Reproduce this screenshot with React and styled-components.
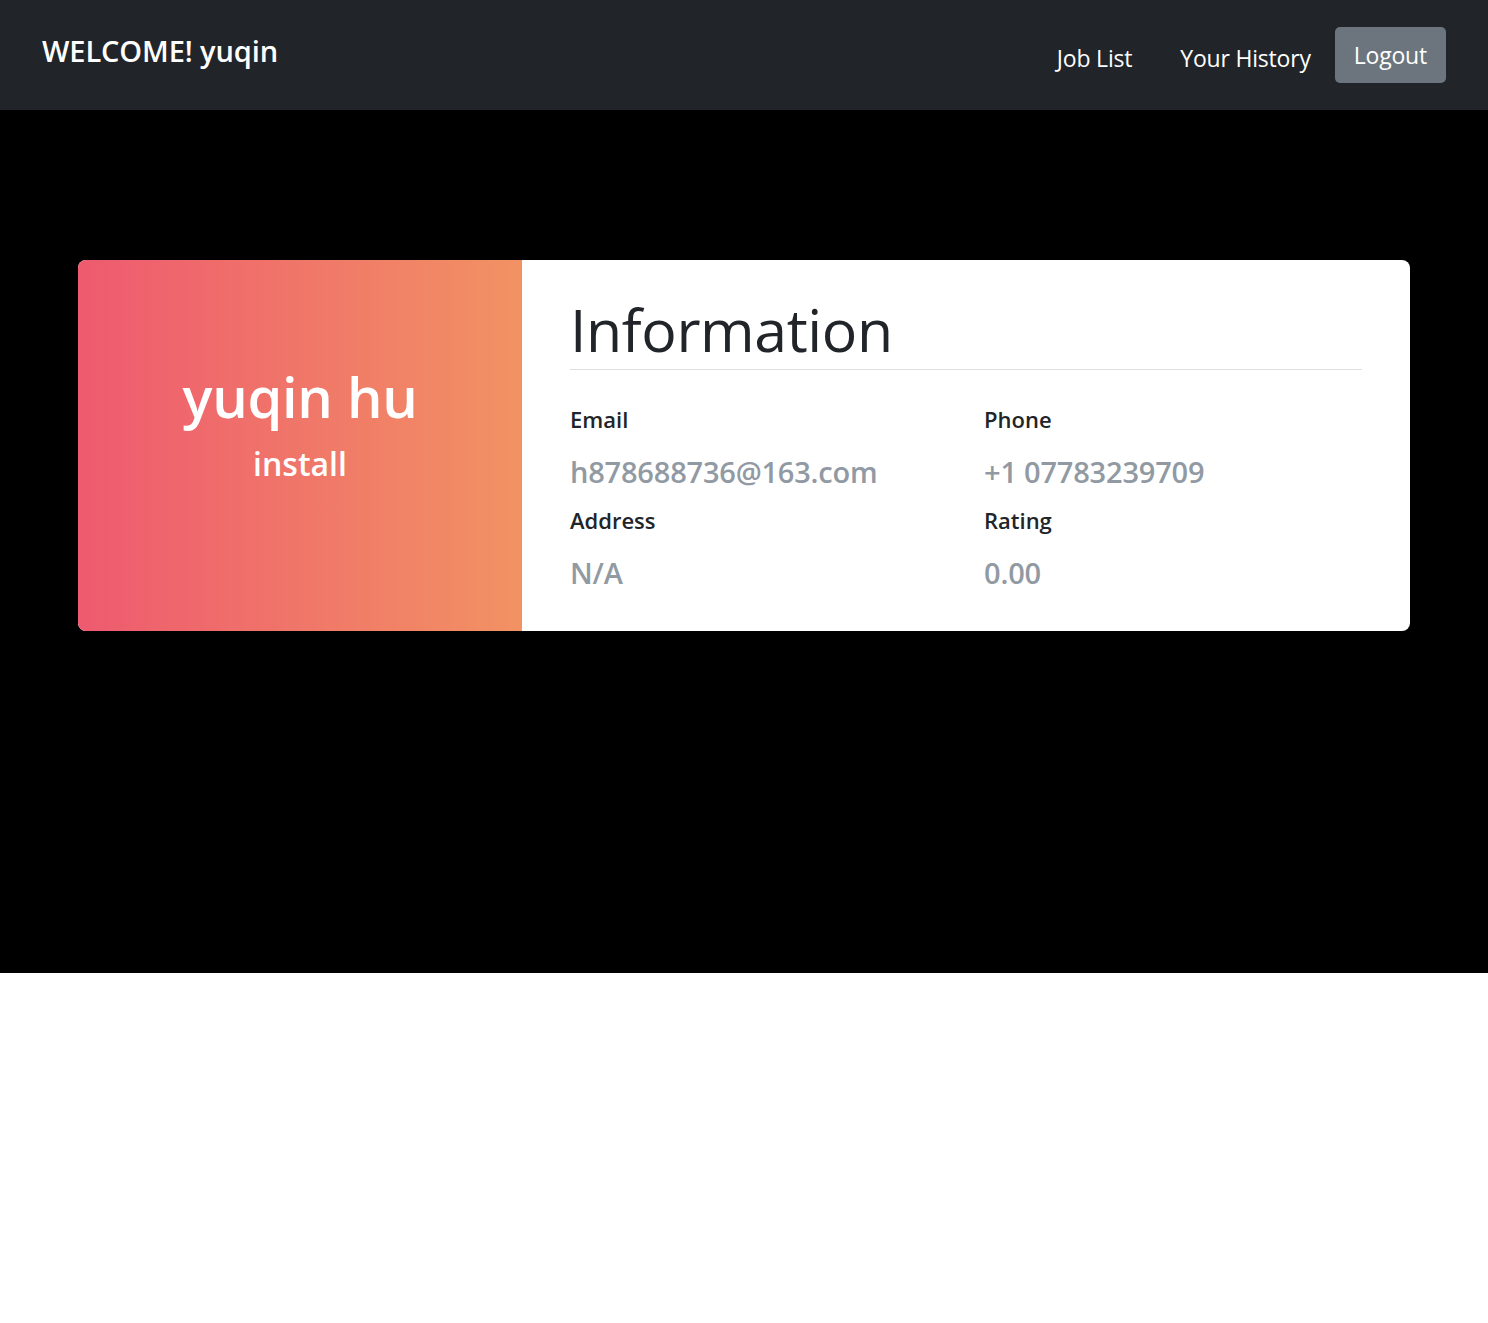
import React from "react";
import styled, { createGlobalStyle } from "styled-components";

const Global = createGlobalStyle`
  html, body { margin: 0; padding: 0; background: #fff; }
  body { font-family: "Open Sans", "Noto Sans", Arial, sans-serif; }
  * { box-sizing: border-box; }
`;

const NavBar = styled.nav`
  height: 110px;
  background: #212529;
  display: flex;
  align-items: center;
  justify-content: space-between;
  padding: 0 42px;
`;

const Brand = styled.div`
  color: #fff;
  font-size: 29px;
  font-weight: 600;
  letter-spacing: -0.1px;
  margin-top: -9px;
`;

const NavLinks = styled.div`
  display: flex;
  align-items: center;
`;

const NavLink = styled.a`
  color: #fff;
  font-size: 23px;
  padding: 0 24px;
  text-decoration: none;
  margin-top: 5px;
  letter-spacing: -0.2px;
`;

const LogoutButton = styled.button`
  font-family: inherit;
  font-size: 23px;
  letter-spacing: -0.2px;
  color: #fff;
  background: #6c757d;
  border: none;
  border-radius: 5px;
  height: 56px;
  padding: 0 19px;
  margin-top: -1px;
  cursor: pointer;
`;

const Stage = styled.main`
  background: #000;
  height: 863px;
  padding: 150px 78px 0;
`;

const Card = styled.section`
  display: flex;
  height: 371px;
  border-radius: 8px;
  overflow: hidden;
  background: #fff;
`;

const Profile = styled.div`
  width: 444px;
  flex: none;
  background: linear-gradient(to right, #ee5a6f, #f29263);
  color: #fff;
  display: flex;
  flex-direction: column;
  align-items: center;
  padding-top: 103px;
`;

const Name = styled.h2`
  margin: 0;
  font-size: 56px;
  font-weight: 600;
  line-height: 1.2;
  letter-spacing: -0.3px;
`;

const Role = styled.p`
  margin: 15px 0 0;
  font-size: 32px;
  font-weight: 600;
  line-height: 1.2;
`;

const Details = styled.div`
  flex: 1;
  padding: 31px 48px 0;
`;

const Heading = styled.h1`
  margin: 0;
  font-size: 59px;
  font-weight: 500;
  color: #212529;
  line-height: 1.3;
  letter-spacing: -0.4px;
  padding-bottom: 1px;
  border-bottom: 1px solid #e0e0e0;
`;

const InfoGrid = styled.div`
  display: grid;
  grid-template-columns: 414px 1fr;
  row-gap: 14px;
  padding-top: 34px;
`;

const Field = styled.div`
  display: flex;
  flex-direction: column;
`;

const Label = styled.span`
  font-size: 22px;
  font-weight: 600;
  color: #212529;
  line-height: 30px;
`;

const Value = styled.span`
  font-size: 29px;
  font-weight: 600;
  color: #919aa3;
  letter-spacing: -0.2px;
  line-height: 38px;
  margin-top: 19px;
`;

const Blank = styled.div`
  height: 350px;
  background: #fff;
`;

const fields = [
  ["Email", "h878688736@163.com"],
  ["Phone", "+1 07783239709"],
  ["Address", "N/A"],
  ["Rating", "0.00"],
];

export default function App() {
  return (
    <>
      <Global />
      <NavBar>
        <Brand>WELCOME! yuqin</Brand>
        <NavLinks>
          <NavLink href="#">Job List</NavLink>
          <NavLink href="#">Your History</NavLink>
          <LogoutButton>Logout</LogoutButton>
        </NavLinks>
      </NavBar>
      <Stage>
        <Card>
          <Profile>
            <Name>yuqin hu</Name>
            <Role>install</Role>
          </Profile>
          <Details>
            <Heading>Information</Heading>
            <InfoGrid>
              {fields.map(([label, value]) => (
                <Field key={label}>
                  <Label>{label}</Label>
                  <Value>{value}</Value>
                </Field>
              ))}
            </InfoGrid>
          </Details>
        </Card>
      </Stage>
      <Blank />
    </>
  );
}
